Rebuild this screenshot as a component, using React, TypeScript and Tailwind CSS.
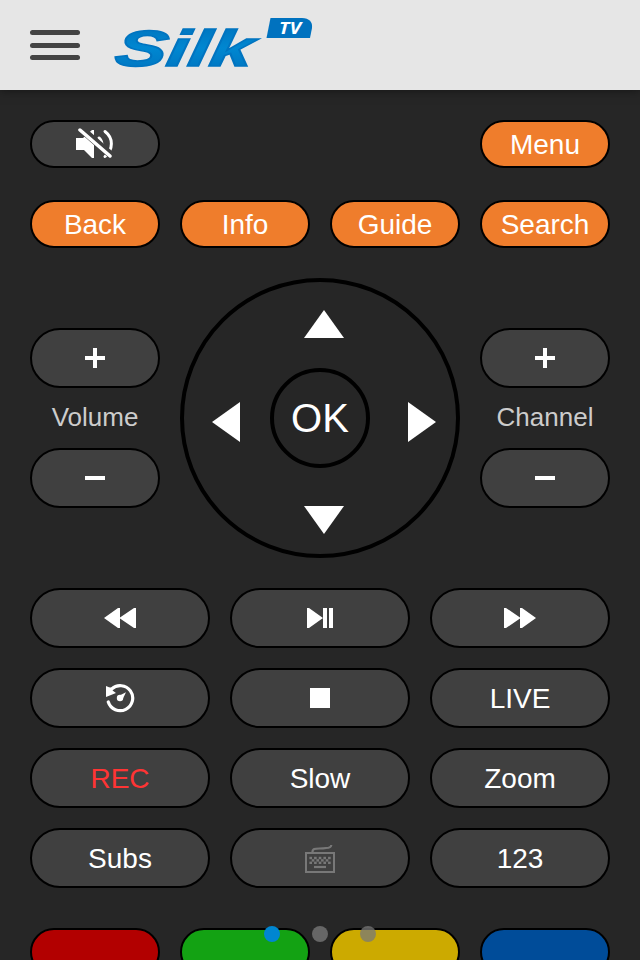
import type { ReactNode } from "react";

const base =
  "flex items-center justify-center rounded-full border-2 border-black text-[28px] leading-none";

function Pill({ children, className }: { children?: ReactNode; className: string }) {
  return (
    <button className={`${base} ${className}`}>
      {typeof children === "string" ? <span className="pt-0.5">{children}</span> : children}
    </button>
  );
}

function Logo() {
  return (
    <svg width="204" height="66" viewBox="110 14 204 66" aria-label="Silk TV">
      <defs>
        <linearGradient id="ink" x1="0" y1="0" x2="0" y2="1">
          <stop offset="0" stopColor="#0070ba" />
          <stop offset="0.5" stopColor="#0087d1" />
          <stop offset="1" stopColor="#0071bc" />
        </linearGradient>
      </defs>
      <text
        transform="translate(113 66) skewX(-10)"
        fontFamily="'Liberation Sans', Arial, sans-serif"
        fontWeight="700"
        fontStyle="italic"
        fontSize="51"
        fill="url(#ink)"
        stroke="#0074c0"
        strokeWidth="1.500"
        textLength="138"
        lengthAdjust="spacingAndGlyphs"
      >
        Silk
      </text>
      <path d="M270.500 18H302Q313 18.500 312 28L310 38H266.500Z" fill="#0072bf" />
      <text
        x="279"
        y="34"
        fontFamily="'Open Sans', 'Noto Sans', sans-serif"
        fontWeight="700"
        fontStyle="italic"
        fontSize="16.500"
        fill="#fff"
        textLength="22"
        lengthAdjust="spacingAndGlyphs"
      >
        TV
      </text>
    </svg>
  );
}

function MuteIcon() {
  return (
    <svg width="40" height="32" viewBox="0 0 40 32" fill="none">
      <path d="M1 10H8L17 2H19V30H17L9 22H1Z" fill="#fff" />
      <path d="M24 10Q27.500 13 27 19M30 3.500C38.500 10 38.500 21 30 28.500" stroke="#fff" strokeWidth="3" strokeLinecap="round" />
      <path d="M2 -1L34 27" stroke="#404040" strokeWidth="7.500" transform="translate(2 0)" />
      <path d="M5 2L35 28" stroke="#fff" strokeWidth="3.500" strokeLinecap="round" />
    </svg>
  );
}

function Plus() {
  return (
    <svg width="20" height="20" viewBox="0 0 20 20" shapeRendering="crispEdges">
      <path d="M8 0H12V8H20V12H12V20H8V12H0V8H8Z" fill="#fff" />
    </svg>
  );
}

function Rewind() {
  return (
    <svg width="32" height="20" viewBox="0 0 32 20" fill="#fff">
      <path d="M0 10L14 0H16V9.500L30 0H32V20H30L16 10.500V20H14Z" />
    </svg>
  );
}

function Forward() {
  return (
    <svg width="32" height="20" viewBox="0 0 32 20" fill="#fff">
      <path d="M32 10L18 0H16V9.500L2 0H0V20H2L16 10.500V20H18Z" />
    </svg>
  );
}

function PlayPause() {
  return (
    <svg width="26" height="20" viewBox="0 0 26 20" fill="#fff">
      <path d="M0 0H2L16 10L2 20H0ZM16 0H20V20H16ZM22 0H26V20H22Z" />
    </svg>
  );
}

function Replay() {
  return (
    <svg width="30" height="30" viewBox="0 0 30 30" fill="none">
      <path d="M6.500 6.200A12.500 12.500 0 1 1 3.300 19" stroke="#fff" strokeWidth="3.200" strokeLinecap="round" />
      <path d="M1 3L4 4.200L8 5L7.500 7.500L11 10L1 14Z" fill="#fff" />
      <circle cx="15" cy="15" r="3.200" fill="#fff" />
      <path d="M13.500 13L21 9.300L17.500 16.500Z" fill="#fff" />
    </svg>
  );
}

function Keyboard() {
  const keys = [0, 1, 2].flatMap((row) =>
    Array.from({ length: row === 1 ? 4 : 5 }, (_, i) => ({
      x: 4.4 + i * 4.67 + (row === 1 ? 2.33 : 0),
      y: 13.8 + row * 2.4,
    })),
  );
  return (
    <svg width="30" height="30" viewBox="0 0 30 30" fill="none">
      <path d="M7.500 9.500C7 3.500 14 6.500 21 5Q26 5 26.300 2" stroke="#787878" strokeWidth="2.200" />
      <rect x="1" y="10" width="28" height="19" stroke="#787878" strokeWidth="2" />
      {keys.map((k) => (
        <rect key={`${k.x}-${k.y}`} x={k.x} y={k.y} width="2.6" height="2.4" fill="#787878" />
      ))}
      <path d="M9 24H21" stroke="#787878" strokeWidth="2.200" />
    </svg>
  );
}

function Rocker({ label }: { label: string }) {
  return (
    <div className="flex h-[180px] w-[130px] flex-col items-center justify-between">
      <Pill className="h-[60px] w-full bg-[#404040]">
        <Plus />
      </Pill>
      <span className="pb-0.5 text-[26px] leading-[30px] text-[#ccc]">{label}</span>
      <Pill className="h-[60px] w-full bg-[#404040]">
        <span className="h-1 w-5 bg-white" />
      </Pill>
    </div>
  );
}

function Dial() {
  return (
    <div className="grid size-[280px] place-items-center rounded-full border-4 border-black">
      <div className="relative grid size-[272px] place-items-center">
        <svg className="absolute inset-0" width="272" height="272" viewBox="184 282 272 272" fill="#fff">
          <path d="M304 338L324 310L344 338Z" />
          <path d="M304 506H344L324 534Z" />
          <path d="M240 402V442L212 422Z" />
          <path d="M408 402V442L436 422Z" />
        </svg>
        <button className="size-[100px] rounded-full border-4 border-black text-[40px] leading-none">OK</button>
      </div>
    </div>
  );
}

export default function App() {
  const wide = "h-[60px] bg-[#404040]";
  const orange = "h-12 bg-[#ef7d2c]";
  return (
    <div className="relative flex h-[960px] w-[640px] flex-col overflow-hidden bg-[#262626] font-['Liberation_Sans',Arial,sans-serif] text-white">
      <header className="flex h-[90px] shrink-0 items-start bg-[#e6e6e6] pl-[30px] shadow-[0_0_10px_rgba(0,0,0,0.5)]">
        <div className="mt-[30px] flex w-[50px] flex-col gap-[7.5px]">
          <span className="h-[5px] rounded-full bg-[#444]" />
          <span className="h-[5px] rounded-full bg-[#444]" />
          <span className="h-[5px] rounded-full bg-[#444]" />
        </div>
        <div className="mt-[14px] ml-[30px]">
          <Logo />
        </div>
      </header>
      <main className="flex flex-col px-[30px] pt-[30px]">
        <div className="flex justify-between">
          <Pill className="h-12 w-[130px] bg-[#404040]">
            <MuteIcon />
          </Pill>
          <Pill className="h-12 w-[130px] bg-[#ef7d2c]">Menu</Pill>
        </div>
        <div className="mt-8 grid grid-cols-4 gap-5">
          <Pill className={orange}>Back</Pill>
          <Pill className={orange}>Info</Pill>
          <Pill className={orange}>Guide</Pill>
          <Pill className={orange}>Search</Pill>
        </div>
        <div className="mt-[30px] flex items-center justify-between">
          <Rocker label="Volume" />
          <Dial />
          <Rocker label="Channel" />
        </div>
        <div className="mt-[30px] grid grid-cols-3 gap-5">
          <Pill className={wide}><Rewind /></Pill>
          <Pill className={wide}><PlayPause /></Pill>
          <Pill className={wide}><Forward /></Pill>
          <Pill className={wide}><Replay /></Pill>
          <Pill className={wide}><span className="size-5 bg-white" /></Pill>
          <Pill className={wide}>LIVE</Pill>
          <Pill className="h-[60px] bg-[#404040] text-[#ff3434]">REC</Pill>
          <Pill className={wide}>Slow</Pill>
          <Pill className={wide}>Zoom</Pill>
          <Pill className={wide}>Subs</Pill>
          <Pill className={wide}><Keyboard /></Pill>
          <Pill className={wide}>123</Pill>
        </div>
        <div className="mt-10 grid grid-cols-4 gap-5">
          <Pill className="h-12 bg-[#b20000]" />
          <Pill className="h-12 bg-[#13a213]" />
          <Pill className="h-12 bg-[#ccaa00]" />
          <Pill className="h-12 bg-[#004c99]" />
        </div>
      </main>
      <nav className="absolute inset-x-0 bottom-[18px] flex justify-center gap-8">
        <span className="size-4 rounded-full bg-[#0086d1]" />
        <span className="size-4 rounded-full bg-[#666]" />
        <span className="size-4 rounded-full bg-[#787878]/75" />
      </nav>
    </div>
  );
}
